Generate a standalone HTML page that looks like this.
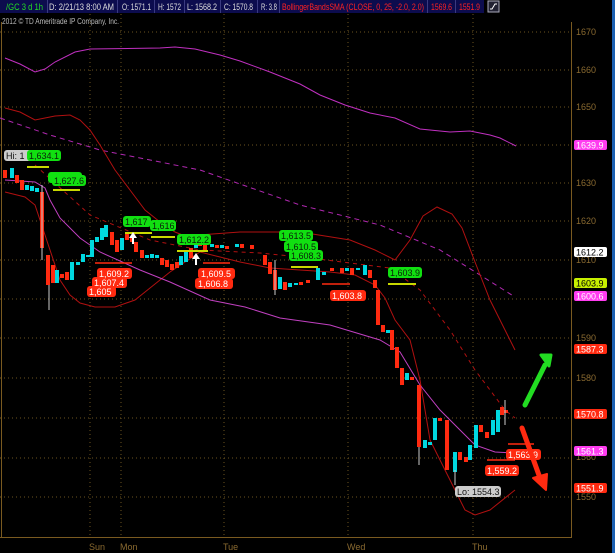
<!DOCTYPE html><html><head><meta charset="utf-8"><style>
body{margin:0;background:#000;width:615px;height:553px;overflow:hidden;font-family:"Liberation Sans",sans-serif}
svg{display:block}
</style></head><body>
<svg width="615" height="553" xmlns="http://www.w3.org/2000/svg" font-family="Liberation Sans, sans-serif">
<rect width="615" height="553" fill="#000"/>
<!-- header -->
<rect x="0" y="0" width="484" height="13" fill="#0c0c4e"/>
<g stroke="#3a3a80" stroke-width="1">
<line x1="47.5" y1="0" x2="47.5" y2="13"/><line x1="117.5" y1="0" x2="117.5" y2="13"/><line x1="154.5" y1="0" x2="154.5" y2="13"/><line x1="184.5" y1="0" x2="184.5" y2="13"/><line x1="220.5" y1="0" x2="220.5" y2="13"/><line x1="257.5" y1="0" x2="257.5" y2="13"/><line x1="279.5" y1="0" x2="279.5" y2="13"/><line x1="427.5" y1="0" x2="427.5" y2="13"/><line x1="455.5" y1="0" x2="455.5" y2="13"/>
</g>
<g font-size="9.5" fill="#ddd" lengthAdjust="spacingAndGlyphs">
<text x="6" y="10" fill="#22dd22" textLength="37" lengthAdjust="spacingAndGlyphs">/GC 3 d 1h</text>
<text x="49" y="10" textLength="65" lengthAdjust="spacingAndGlyphs">D: 2/21/13 8:00 AM</text>
<text x="122" y="10" textLength="29" lengthAdjust="spacingAndGlyphs">O: 1571.1</text>
<text x="158" y="10" textLength="23" lengthAdjust="spacingAndGlyphs">H: 1572</text>
<text x="187" y="10" textLength="30" lengthAdjust="spacingAndGlyphs">L: 1568.2</text>
<text x="224" y="10" textLength="29" lengthAdjust="spacingAndGlyphs">C: 1570.8</text>
<text x="261" y="10" textLength="16" lengthAdjust="spacingAndGlyphs">R: 3.8</text>
<text x="282" y="10" fill="#ff2222" textLength="142" lengthAdjust="spacingAndGlyphs">BollingerBandsSMA (CLOSE, 0, 25, -2.0, 2.0)</text>
<text x="431" y="10" fill="#ff2222" textLength="21" lengthAdjust="spacingAndGlyphs">1569.6</text>
<text x="459" y="10" fill="#ff2222" textLength="21" lengthAdjust="spacingAndGlyphs">1551.9</text>
</g>
<rect x="488" y="1" width="11" height="11" fill="#223" stroke="#aab" stroke-width="1"/>
<path d="M490 9h2l3-5h2" stroke="#fff" fill="none" stroke-width="1"/>
<text x="2" y="24" font-size="8.5" fill="#bbb" textLength="117" lengthAdjust="spacingAndGlyphs">2012 © TD Ameritrade IP Company, Inc.</text>
<rect x="612" y="0" width="3" height="553" fill="#1a5fb0"/>
<!-- grid -->
<g stroke="#6b5420" stroke-width="1" stroke-dasharray="1,3">
<line x1="0" y1="32" x2="571" y2="32"/><line x1="0" y1="70" x2="571" y2="70"/><line x1="0" y1="107" x2="571" y2="107"/><line x1="0" y1="145" x2="571" y2="145"/><line x1="0" y1="183" x2="571" y2="183"/><line x1="0" y1="221" x2="571" y2="221"/><line x1="0" y1="260" x2="571" y2="260"/><line x1="0" y1="299" x2="571" y2="299"/><line x1="0" y1="338" x2="571" y2="338"/><line x1="0" y1="378" x2="571" y2="378"/><line x1="0" y1="418" x2="571" y2="418"/><line x1="0" y1="458" x2="571" y2="458"/><line x1="0" y1="497" x2="571" y2="497"/>
<line x1="90" y1="14" x2="90" y2="537"/><line x1="121" y1="14" x2="121" y2="537"/><line x1="224" y1="14" x2="224" y2="537"/><line x1="348" y1="14" x2="348" y2="537"/><line x1="473" y1="14" x2="473" y2="537"/>
</g>
<line x1="571.5" y1="22" x2="571.5" y2="538" stroke="#7a5a20"/>
<line x1="1.5" y1="22" x2="1.5" y2="538" stroke="#7a5a20"/>
<line x1="0" y1="537.5" x2="572" y2="537.5" stroke="#7a5a20"/>
<g font-size="9" fill="#8a6a30">
<text x="576" y="35">1670</text><text x="576" y="73">1660</text><text x="576" y="110">1650</text><text x="576" y="186">1630</text><text x="576" y="224">1620</text><text x="576" y="263">1610</text><text x="576" y="341">1590</text><text x="576" y="381">1580</text><text x="576" y="460">1560</text><text x="576" y="500">1550</text>
<text x="89" y="550">Sun</text><text x="120" y="550">Mon</text><text x="223" y="550">Tue</text><text x="347" y="550">Wed</text><text x="472" y="550">Thu</text>
</g>
<!-- bands -->
<g fill="none" stroke-width="1">
<polyline stroke="#c030c0" points="5,58 20,64 35,72 45,69 55,62 75,52 90,49 160,48 175,47 195,49 220,55 240,61 270,72 300,84 320,95 345,105 370,113 395,118 420,129 450,132 470,131 490,135 500,138 516,146"/>
<polyline stroke="#b028b0" stroke-dasharray="5,4" points="0,118 50,135 100,150 200,170 300,205 380,225 440,250 480,275 515,297"/>
<polyline stroke="#b01010" points="5,108 20,112 35,120 45,118 55,116 70,115 80,120 90,130 100,145 115,170 130,190 145,210 160,222 175,232 185,236 240,232 300,232 350,240 375,250 395,260 410,240 423,216 437,207 452,214 462,228 475,262 490,300 515,350"/>
<polyline stroke="#b01010" points="5,192 25,197 35,205 45,235 60,280 70,295 80,303 95,307 115,307 135,300 150,288 170,272 200,252 240,262 270,268 300,270 330,272 355,275 375,285 385,298 395,320 410,340 420,380 430,440 440,460 455,490 465,510 475,515 490,510 515,490"/>
<polyline stroke="#b01010" stroke-dasharray="4,4" points="35,165 90,215 150,240 200,250 260,253 310,258 390,268 420,290 450,330 475,370 505,410 515,418"/>
<polyline stroke="#c040c0" points="5,180 20,181 35,182 45,188 50,200 60,218 80,238 100,252 140,270 170,282 210,300 245,307 280,318 330,325 380,340 400,352 420,385 440,410 460,430 475,445 495,452 513,453"/>
</g>
<!-- candles -->
<g>
<g fill="#ff2a10">
<rect x="3" y="170" width="4" height="8"/><rect x="15" y="175" width="4" height="8"/><rect x="20" y="180" width="4" height="10"/><rect x="40" y="192" width="4" height="56"/><rect x="46" y="255" width="4" height="30"/><rect x="51" y="265" width="4" height="18"/><rect x="60" y="274" width="4" height="4"/><rect x="65" y="272" width="4" height="8"/><rect x="110" y="232" width="4" height="13"/><rect x="115" y="240" width="4" height="12"/><rect x="125" y="234" width="4" height="6"/><rect x="130" y="237" width="4" height="5"/><rect x="134" y="242" width="4" height="10"/><rect x="140" y="250" width="4" height="8"/><rect x="160" y="258" width="4" height="7"/><rect x="165" y="260" width="4" height="7"/><rect x="170" y="264" width="4" height="6"/><rect x="175" y="262" width="4" height="6"/><rect x="189" y="248" width="4" height="10"/><rect x="198" y="240" width="4" height="6"/><rect x="203" y="243" width="4" height="7"/><rect x="215" y="245" width="4" height="3"/><rect x="225" y="246" width="4" height="3"/><rect x="240" y="244" width="4" height="4"/><rect x="250" y="245" width="4" height="4"/><rect x="263" y="255" width="4" height="10"/><rect x="268" y="262" width="4" height="12"/><rect x="273" y="270" width="4" height="20"/><rect x="283" y="282" width="4" height="8"/><rect x="299" y="282" width="4" height="3"/><rect x="306" y="280" width="4" height="3"/><rect x="330" y="268" width="4" height="3"/><rect x="340" y="268" width="4" height="5"/><rect x="350" y="268" width="4" height="7"/><rect x="368" y="270" width="4" height="8"/><rect x="373" y="280" width="4" height="8"/><rect x="376" y="290" width="4" height="35"/><rect x="381" y="325" width="4" height="7"/><rect x="390" y="330" width="4" height="20"/><rect x="395" y="347" width="4" height="21"/><rect x="400" y="368" width="4" height="17"/><rect x="410" y="377" width="4" height="3"/><rect x="417" y="385" width="4" height="62"/><rect x="438" y="418" width="4" height="3"/><rect x="445" y="420" width="4" height="50"/><rect x="458" y="452" width="4" height="8"/><rect x="464" y="457" width="4" height="5"/><rect x="479" y="425" width="4" height="7"/><rect x="485" y="432" width="4" height="6"/><rect x="500" y="407" width="4" height="8"/><rect x="504" y="410" width="4" height="3"/>
</g>
<g fill="#00d8e0">
<rect x="10" y="168" width="4" height="10"/><rect x="25" y="185" width="4" height="5"/><rect x="30" y="186" width="4" height="5"/><rect x="35" y="188" width="4" height="4"/><rect x="55" y="270" width="4" height="13"/><rect x="70" y="262" width="4" height="18"/><rect x="76" y="262" width="4" height="3"/><rect x="81" y="254" width="4" height="8"/><rect x="86" y="255" width="4" height="2"/><rect x="90" y="240" width="4" height="17"/><rect x="95" y="237" width="4" height="5"/><rect x="100" y="228" width="4" height="12"/><rect x="104" y="225" width="4" height="12"/><rect x="120" y="238" width="4" height="12"/><rect x="145" y="255" width="4" height="3"/><rect x="150" y="254" width="4" height="4"/><rect x="155" y="255" width="4" height="3"/><rect x="179" y="256" width="4" height="9"/><rect x="184" y="250" width="4" height="12"/><rect x="194" y="243" width="4" height="5"/><rect x="210" y="244" width="4" height="3"/><rect x="220" y="245" width="4" height="3"/><rect x="235" y="244" width="4" height="3"/><rect x="278" y="277" width="4" height="12"/><rect x="288" y="283" width="4" height="4"/><rect x="294" y="283" width="4" height="2"/><rect x="316" y="268" width="4" height="12"/><rect x="322" y="272" width="4" height="3"/><rect x="345" y="268" width="4" height="3"/><rect x="356" y="268" width="4" height="2"/><rect x="363" y="265" width="4" height="10"/><rect x="386" y="330" width="4" height="3"/><rect x="405" y="373" width="4" height="7"/><rect x="423" y="440" width="4" height="8"/><rect x="428" y="442" width="4" height="3"/><rect x="433" y="418" width="4" height="22"/><rect x="453" y="452" width="4" height="20"/><rect x="468" y="445" width="4" height="15"/><rect x="474" y="425" width="4" height="23"/><rect x="491" y="420" width="4" height="15"/><rect x="496" y="410" width="4" height="22"/>
</g>
<g stroke="#ccc" stroke-width="1"><line x1="49" y1="285" x2="49" y2="310"/><line x1="42" y1="185" x2="42" y2="260"/><line x1="419" y1="447" x2="419" y2="465"/><line x1="455" y1="470" x2="455" y2="485"/><line x1="505" y1="400" x2="505" y2="425"/><line x1="275" y1="260" x2="275" y2="295"/></g>
</g>
<!-- yellow lines -->
<g stroke="#c8d800" stroke-width="2">
<line x1="27" y1="167" x2="49" y2="167"/><line x1="53" y1="190" x2="80" y2="190"/><line x1="125" y1="233" x2="152" y2="233"/><line x1="151" y1="237" x2="175" y2="237"/><line x1="177" y1="251" x2="208" y2="251"/><line x1="291" y1="267" x2="318" y2="267"/><line x1="388" y1="284" x2="416" y2="284"/>
</g>
<g stroke="#ff2a10" stroke-width="1.5">
<line x1="95" y1="263" x2="132" y2="263"/><line x1="203" y1="263" x2="230" y2="263"/><line x1="322" y1="284" x2="350" y2="284"/><line x1="508" y1="444" x2="534" y2="444"/><line x1="487" y1="460" x2="515" y2="460"/>
</g>
<path d="M133 232l-4 6h3v6h2v-6h3z" fill="#fff"/><path d="M196 253l-4 6h3v6h2v-6h3z" fill="#fff"/>
<!-- labels -->
<g font-size="9">
<g fill="#ccc"><rect x="4" y="150" width="28" height="11" rx="3"/><rect x="455" y="486" width="46" height="11" rx="3"/></g>
<g fill="#111"><text x="6" y="159">Hi: 1</text><text x="457" y="495">Lo: 1554.3</text></g>
<g fill="#11e011">
<rect x="27" y="150" width="34" height="11" rx="3"/><rect x="48" y="172" width="34" height="11" rx="3"/><rect x="52" y="175" width="34" height="11" rx="3"/><rect x="123" y="216" width="28" height="11" rx="3"/><rect x="150" y="220" width="26" height="11" rx="3"/><rect x="177" y="234" width="34" height="11" rx="3"/><rect x="279" y="230" width="34" height="11" rx="3"/><rect x="284" y="241" width="34" height="11" rx="3"/><rect x="289" y="250" width="34" height="11" rx="3"/><rect x="388" y="267" width="34" height="11" rx="3"/>
</g>
<g fill="#0a200a">
<text x="29" y="159">1,634.1</text><text x="54" y="184">1,627.6</text><text x="125" y="225">1,617</text><text x="152" y="229">1,616</text><text x="179" y="243">1,612.2</text><text x="281" y="239">1,613.5</text><text x="286" y="250">1,610.5</text><text x="291" y="259">1,608.3</text><text x="390" y="276">1,603.9</text>
</g>
<g fill="#ff2a10">
<rect x="97" y="268" width="35" height="11" rx="3"/><rect x="92" y="277" width="35" height="11" rx="3"/><rect x="87" y="286" width="29" height="11" rx="3"/><rect x="198" y="268" width="37" height="11" rx="3"/><rect x="195" y="278" width="38" height="11" rx="3"/><rect x="330" y="290" width="36" height="11" rx="3"/><rect x="506" y="449" width="35" height="11" rx="3"/><rect x="485" y="465" width="34" height="11" rx="3"/>
</g>
<g fill="#fff">
<text x="99" y="277">1,609.2</text><text x="94" y="286">1,607.4</text><text x="89" y="295">1,605</text><text x="201" y="277">1,609.5</text><text x="198" y="287">1,606.8</text><text x="332" y="299">1,603.8</text><text x="508" y="458">1,563.9</text><text x="487" y="474">1,559.2</text>
</g>
<rect x="574" y="140" width="33" height="10" rx="2" fill="#ff3cf0"/><text x="576" y="148.5" fill="#fff">1639.9</text>
<rect x="574" y="247" width="33" height="10" rx="2" fill="#fff"/><text x="576" y="255.5" fill="#000">1612.2</text>
<rect x="574" y="278" width="33" height="10" rx="2" fill="#c8f000"/><text x="576" y="286.5" fill="#000">1603.9</text>
<rect x="574" y="291" width="33" height="10" rx="2" fill="#ff3cf0"/><text x="576" y="299.5" fill="#fff">1600.6</text>
<rect x="574" y="344" width="33" height="10" rx="2" fill="#ff2a10"/><text x="576" y="352.5" fill="#fff">1587.3</text>
<rect x="574" y="409" width="33" height="10" rx="2" fill="#ff2a10"/><text x="576" y="417.5" fill="#fff">1570.8</text>
<rect x="574" y="446" width="33" height="10" rx="2" fill="#ff3cf0"/><text x="576" y="454.5" fill="#fff">1561.3</text>
<rect x="574" y="483" width="33" height="10" rx="2" fill="#ff2a10"/><text x="576" y="491.5" fill="#fff">1551.9</text>
</g>
<path d="M525 405L545 365" stroke="#22dd22" stroke-width="5" stroke-linecap="round"/>
<path d="M541 355l10 0-2 11z" fill="#22dd22" stroke="#22dd22" stroke-width="3" stroke-linejoin="round"/>
<path d="M522 428L540 478" stroke="#ff2a10" stroke-width="5" stroke-linecap="round"/>
<path d="M533 478l14 -4-1 16z" fill="#ff2a10" stroke="#ff2a10" stroke-width="2" stroke-linejoin="round"/>
</svg>
</body></html>
